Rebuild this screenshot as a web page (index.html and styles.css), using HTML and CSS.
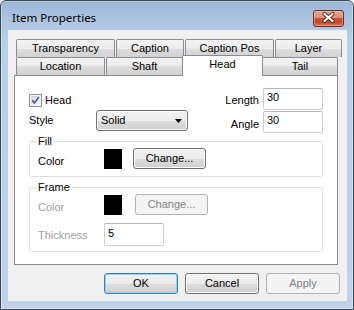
FILE: index.html
```html
<!DOCTYPE html>
<html>
<head>
<meta charset="utf-8">
<title>Item Properties</title>
<link rel="stylesheet" href="styles.css">
</head>
<body>
<div class="window">
  <div class="titlebar">
    <span class="title">Item Properties</span>
    <span class="close">
      <svg width="29" height="15" viewBox="0 0 29 15">
        <path d="M10.5 3 L18.5 10 M18.5 3 L10.5 10" stroke="#5b2720" stroke-width="4.2" stroke-linecap="round" fill="none"/>
        <path d="M10.5 3 L18.5 10 M18.5 3 L10.5 10" stroke="#ffffff" stroke-width="2.3" stroke-linecap="round" fill="none"/>
      </svg>
    </span>
  </div>
  <div class="client">
    <div class="tabs">
      <div class="tabrow">
        <div class="tab t-transp">Transparency</div>
        <div class="tab t-caption">Caption</div>
        <div class="tab t-cpos">Caption Pos</div>
        <div class="tab t-layer">Layer</div>
      </div>
      <div class="tabrow">
        <div class="tab t-loc">Location</div>
        <div class="tab t-shaft">Shaft</div>
        <div class="tab t-head selected">Head</div>
        <div class="tab t-tail">Tail</div>
      </div>
    </div>
    <div class="panel">
      <div class="top">
        <div class="left">
          <div class="check-row">
            <svg class="checkbox" width="13" height="13" viewBox="0 0 13 13">
              <defs>
                <linearGradient id="cg" x1="0" y1="0" x2="1" y2="1">
                  <stop offset="0" stop-color="#cfd3d9"/>
                  <stop offset="1" stop-color="#fafafa"/>
                </linearGradient>
              </defs>
              <rect x="0.5" y="0.5" width="12" height="12" fill="#f6f6f6" stroke="#8e8f8f"/>
              <rect x="2" y="2" width="9" height="9" fill="url(#cg)"/>
              <path d="M3.2 6.4 L5.4 8.9 L9.9 3.1" fill="none" stroke="#4a5f97" stroke-width="1.7"/>
            </svg>
            <span class="check-label">Head</span>
          </div>
          <div class="style-row">
            <span class="style-label">Style</span>
            <div class="combo">
              <span>Solid</span>
              <svg width="7" height="4" viewBox="0 0 7 4"><path d="M0 0 H7 L3.5 4 Z" fill="#000"/></svg>
            </div>
          </div>
        </div>
        <div class="right">
          <span class="rlabel">Length</span><span class="edit">30</span>
          <span class="rlabel low">Angle</span><span class="edit">30</span>
        </div>
      </div>
      <fieldset class="group fill">
        <legend>Fill</legend>
        <div class="grow">
          <span class="glabel">Color</span>
          <span class="swatch"></span>
          <span class="btn change">Change...</span>
        </div>
      </fieldset>
      <fieldset class="group frame">
        <legend>Frame</legend>
        <div class="grow">
          <span class="glabel disabled">Color</span>
          <span class="swatch"></span>
          <span class="btn change off">Change...</span>
        </div>
        <div class="grow thick">
          <span class="glabel disabled tlabel">Thickness</span>
          <span class="edit tedit">5</span>
        </div>
      </fieldset>
    </div>
    <div class="buttons">
      <span class="btn dlg default">OK</span>
      <span class="btn dlg">Cancel</span>
      <span class="btn dlg off">Apply</span>
    </div>
  </div>
</div>
</body>
</html>
```

FILE: styles.css
```css
html, body {
  margin: 0;
  padding: 0;
  background: #ffffff;
}
body {
  font-family: "Liberation Sans", Arial, sans-serif;
  font-size: 11px;
  line-height: 13px;
  color: #000;
}
.window {
  width: 354px;
  height: 310px;
  box-sizing: border-box;
  border: 1px solid #3e4852;
  border-radius: 6px 6px 0 0;
  background: linear-gradient(#9bb7d8 0px, #adc5e1 20px, #b8cfe8 40px, #bed3ea 100%);
  box-shadow: inset 0 0 0 1px rgba(255,255,255,0.35);
  display: flex;
  flex-direction: column;
  overflow: hidden;
}
.titlebar {
  height: 29px;
  display: flex;
  align-items: flex-start;
  padding-left: 11px;
  flex: none;
}
.title {
  font-family: "Noto Sans", "Liberation Sans", sans-serif;
  font-size: 11.5px;
  line-height: 14px;
  margin-top: 10px;
  color: #000;
}
.close {
  margin-left: auto;
  margin-right: 9px;
  margin-top: 9px;
  width: 31px;
  height: 17px;
  box-sizing: border-box;
  border: 1px solid #6e2a22;
  border-radius: 3px;
  background: linear-gradient(#e7a896 0%, #dc8d79 45%, #c9553b 50%, #c2472d 75%, #d67a5c 100%);
  box-shadow: inset 0 0 0 1px rgba(255,210,200,0.45);
  display: flex;
}
.client {
  margin-left: 7px;
  width: 339px;
  height: 271px;
  box-sizing: border-box;
  background: #f0f0f0;
  padding: 9px 7px 0 6px;
  display: flex;
  flex-direction: column;
  flex: none;
}
.tabs {
  margin-left: 2px;
}
.tabrow {
  display: flex;
  gap: 1px;
  height: 18px;
  align-items: flex-end;
}
.tab {
  box-sizing: border-box;
  height: 18px;
  border: 1px solid #898c95;
  border-bottom: 0;
  border-radius: 2px 2px 0 0;
  background: linear-gradient(#f3f3f3, #ebebeb 50%, #dddddd 50%, #d2d2d2);
  text-align: center;
  padding-top: 2px;
  flex: none;
  white-space: nowrap;
}
.t-transp { width: 99px; }
.t-caption { width: 68px; }
.t-cpos { width: 89px; }
.t-layer { width: 67px; }
.t-loc { width: 89px; }
.t-shaft { width: 77px; }
.t-head { width: 77px; }
.t-tail { width: 76px; }
.tab.selected {
  width: 81px;
  height: 21px;
  margin: 0 -2px -1px -2px;
  background: #ffffff;
  position: relative;
  z-index: 1;
}
.panel {
  box-sizing: border-box;
  width: 324px;
  height: 190px;
  background: #ffffff;
  border: 1px solid #898c95;
  padding: 12px 14px 0 14px;
  flex: none;
}
.top {
  display: flex;
  justify-content: space-between;
  align-items: flex-start;
}
.left {
  display: flex;
  flex-direction: column;
}
.check-row {
  display: flex;
  align-items: flex-start;
  margin-top: 6px;
  height: 13px;
}
.checkbox {
  display: block;
  flex: none;
}
.check-label {
  margin-left: 3px;
}
.style-row {
  display: flex;
  align-items: flex-start;
  margin-top: 3px;
}
.style-label {
  width: 67px;
  margin-top: 4px;
}
.combo {
  box-sizing: border-box;
  width: 92px;
  height: 21px;
  border: 1px solid #707070;
  border-radius: 3px;
  background: linear-gradient(#f2f2f2, #ebebeb 50%, #dddddd 50%, #cfcfcf);
  box-shadow: inset 0 0 0 1px #fcfcfc;
  display: flex;
  align-items: center;
  justify-content: space-between;
  padding: 0 5px 0 4px;
}
.combo svg {
  display: block;
}
.right {
  display: grid;
  grid-template-columns: auto 60px;
  grid-auto-rows: 22px;
  column-gap: 4px;
  row-gap: 1px;
}
.rlabel {
  justify-self: end;
  margin-top: 6px;
}
.rlabel.low {
  margin-top: 7px;
}
.edit {
  box-sizing: border-box;
  height: 22px;
  border: 1px solid #c9ccd2;
  border-top-color: #b3b7be;
  border-radius: 2px;
  padding: 2px 3px 0 3px;
  background: #ffffff;
}
.group {
  margin: 2px 0 0 0;
  border: 1px solid #d5dfe5;
  border-radius: 3px;
  padding: 0 0 7px 0;
  min-width: 0;
}
.group legend {
  padding: 0 2px;
  margin-left: 6px;
  line-height: 13px;
}
.group.frame {
  margin-top: 4px;
  padding-bottom: 5px;
}
.grow {
  display: flex;
  align-items: flex-start;
  height: 21px;
  padding-left: 8px;
}
.grow.thick {
  margin-top: 8px;
  height: 23px;
}
.glabel {
  width: 66px;
  margin-top: 7px;
  flex: none;
}
.glabel.tlabel {
  margin-top: 6px;
}
.disabled {
  color: #a0a0a0;
}
.swatch {
  width: 18px;
  height: 20px;
  margin-top: 1px;
  background: #000000;
  flex: none;
}
.btn {
  box-sizing: border-box;
  height: 21px;
  border: 1px solid #707070;
  border-radius: 3px;
  background: linear-gradient(#f2f2f2, #ebebeb 50%, #dddddd 50%, #cfcfcf);
  box-shadow: inset 0 0 0 1px #fcfcfc;
  display: flex;
  align-items: center;
  justify-content: center;
  flex: none;
}
.btn.change {
  width: 73px;
  margin-left: 11px;
}
.frame .btn.change {
  margin-left: 13px;
}
.btn.off {
  border-color: #adb2b5;
  background: #f4f4f4;
  box-shadow: none;
  color: #838383;
}
.tedit {
  width: 60px;
  height: 23px;
  padding-top: 3px;
}
.buttons {
  display: flex;
  justify-content: flex-end;
  gap: 7px;
  margin-top: 8px;
}
.btn.dlg {
  width: 74px;
}
.btn.default {
  border-color: #3c7fb1;
  box-shadow: inset 0 0 0 1px #8fd3f5;
}
```
